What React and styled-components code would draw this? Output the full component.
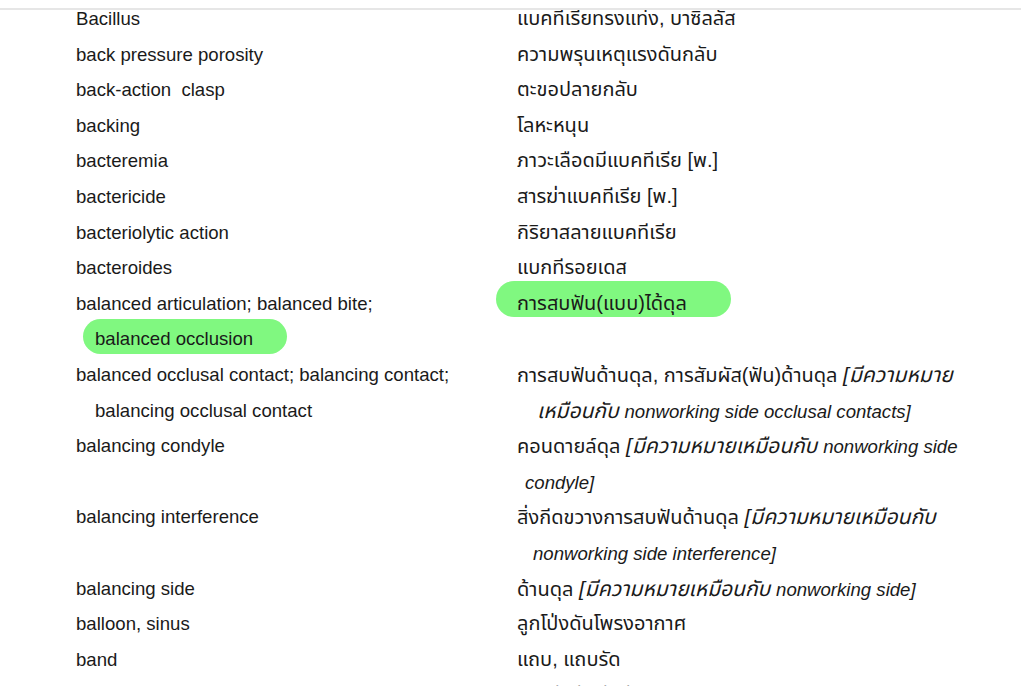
import React from "react";
import styled, { createGlobalStyle } from "styled-components";

const GlobalStyle = createGlobalStyle`
  html, body {
    margin: 0;
    padding: 0;
    background: #ffffff;
    overflow: hidden;
  }
  body {
    font-family: "Liberation Sans", Arial, "Noto Sans Thai", "Noto Sans", sans-serif;
    color: #1a1a1a;
  }
`;

const TopBar = styled.div`
  position: fixed;
  top: 0;
  left: 0;
  right: 2px;
  height: 8px;
  background: #ffffff;
  border-bottom: 2px solid #e6e6e6;
  z-index: 5;
`;

const Sheet = styled.div`
  padding: 1px 0 0 76px;
  display: grid;
  grid-template-columns: 441px 1fr;
  font-size: 18.6px;
  line-height: 35.6px;
`;

const Cell = styled.div`
  white-space: nowrap;
  font-size: ${(p) => (p.$thai ? "20px" : "inherit")};
`;

const Line = styled.div`
  height: 35.6px;
  padding-left: ${(p) => p.$indent || 0}px;
`;

const Em = styled.span`
  font-style: italic;
  font-size: 21px;
`;

const Lat = styled.span`
  font-size: 18.6px;
`;

const Mark = styled.span`
  position: relative;
  display: inline-block;
  isolation: isolate;
  &::before {
    content: "";
    position: absolute;
    z-index: -1;
    left: ${(p) => p.$left}px;
    width: ${(p) => p.$width}px;
    top: ${(p) => p.$top}px;
    height: ${(p) => p.$height}px;
    background: #80f880;
    border-radius: 18px;
  }
`;

const entries = [
  { term: ["Bacillus"], def: ["แบคทีเรียทรงแท่ง, บาซิลลัส"] },
  { term: ["back pressure porosity"], def: ["ความพรุนเหตุแรงดันกลับ"] },
  { term: ["back-action\u00a0\u00a0clasp"], def: ["ตะขอปลายกลับ"] },
  { term: ["backing"], def: ["โลหะหนุน"] },
  { term: ["bacteremia"], def: ["ภาวะเลือดมีแบคทีเรีย [พ.]"] },
  { term: ["bactericide"], def: ["สารฆ่าแบคทีเรีย [พ.]"] },
  { term: ["bacteriolytic action"], def: ["กิริยาสลายแบคทีเรีย"] },
  { term: ["bacteroides"], def: ["แบกทีรอยเดส"] },
  {
    term: [
      "balanced articulation; balanced bite;",
      {
        indent: 19,
        node: (
          <Mark $left={-12} $width={204} $top={-2} $height={35}>
            balanced occlusion
          </Mark>
        ),
      },
    ],
    def: [
      {
        node: (
          <Mark $left={-21} $width={235} $top={-5} $height={36}>
            การสบฟัน(แบบ)ได้ดุล
          </Mark>
        ),
      },
    ],
  },
  {
    term: [
      "balanced occlusal contact; balancing contact;",
      { indent: 19, node: "balancing occlusal contact" },
    ],
    def: [
      {
        node: (
          <>
            การสบฟันด้านดุล, การสัมผัส(ฟัน)ด้านดุล <Em>[มีความหมาย</Em>
          </>
        ),
      },
      {
        indent: 20,
        node: (
          <Em>
            เหมือนกับ <Lat>nonworking side occlusal contacts]</Lat>
          </Em>
        ),
      },
    ],
  },
  {
    term: ["balancing condyle"],
    def: [
      {
        node: (
          <>
            คอนดายล์ดุล{" "}
            <Em>
              [มีความหมายเหมือนกับ <Lat>nonworking side</Lat>
            </Em>
          </>
        ),
      },
      {
        indent: 8,
        node: (
          <Em>
            <Lat>condyle]</Lat>
          </Em>
        ),
      },
    ],
  },
  {
    term: ["balancing interference"],
    def: [
      {
        node: (
          <>
            สิ่งกีดขวางการสบฟันด้านดุล <Em>[มีความหมายเหมือนกับ</Em>
          </>
        ),
      },
      {
        indent: 16,
        node: (
          <Em>
            <Lat>nonworking side interference]</Lat>
          </Em>
        ),
      },
    ],
  },
  {
    term: ["balancing side"],
    def: [
      {
        node: (
          <>
            ด้านดุล{" "}
            <Em>
              [มีความหมายเหมือนกับ <Lat>nonworking side]</Lat>
            </Em>
          </>
        ),
      },
    ],
  },
  { term: ["balloon, sinus"], def: ["ลูกโป่งดันโพรงอากาศ"] },
  { term: ["band"], def: ["แถบ, แถบรัด"] },
  { term: ["band, orthodontic"], def: ["แถบรัดฟันจัดฟัน"] },
];

const renderLines = (lines) =>
  lines.map((l, i) =>
    typeof l === "string" ? (
      <Line key={i}>{l}</Line>
    ) : (
      <Line key={i} $indent={l.indent}>
        {l.node}
      </Line>
    )
  );

export default function App() {
  return (
    <>
      <GlobalStyle />
      <TopBar />
      <Sheet>
        {entries.map((e, i) => (
          <React.Fragment key={i}>
            <Cell>{renderLines(e.term)}</Cell>
            <Cell $thai>{renderLines(e.def)}</Cell>
          </React.Fragment>
        ))}
      </Sheet>
    </>
  );
}
